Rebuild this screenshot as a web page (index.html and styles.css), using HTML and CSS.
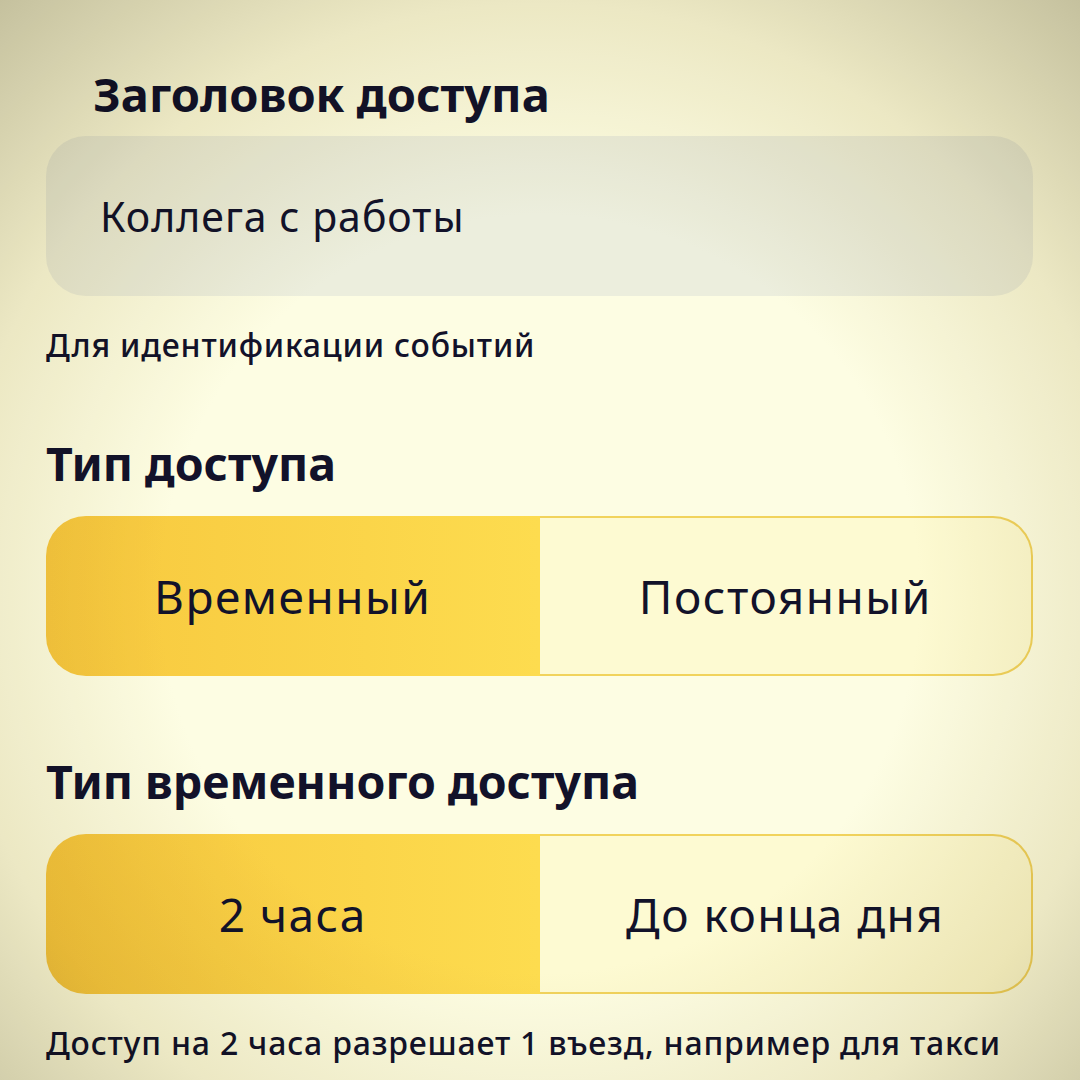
FILE: index.html
```html
<!DOCTYPE html>
<html lang="ru">

<head>
  <meta charset="UTF-8">
  <meta name="viewport" content="width=device-width, initial-scale=1.0">
  <title>Новый доступ</title>
  <link rel="stylesheet" href="styles.css">
</head>

<body>
  <div class="form">
    <h1 class="title">Заголовок доступа</h1>
    <div class="field">Коллега с работы</div>
    <p class="hint">Для идентификации событий</p>

    <h2 class="section">Тип доступа</h2>
    <div class="segmented">
      <button class="segment active">Временный</button>
      <button class="segment">Постоянный</button>
    </div>

    <h2 class="section section-second">Тип временного доступа</h2>
    <div class="segmented">
      <button class="segment active">2 часа</button>
      <button class="segment">До конца дня</button>
    </div>
    <p class="hint hint-bottom">Доступ на 2 часа разрешает 1 въезд, например для такси</p>
  </div>
</body>

</html>
```

FILE: styles.css
```css
body {
  margin: 0;
  min-height: 100vh;
  background-color: #fdfde3;
  font-family: "Noto Sans", "Open Sans", sans-serif;
  color: #12122a;
}

/* soft dark edges over the whole screen */
body::after {
  content: "";
  position: fixed;
  inset: 0;
  pointer-events: none;
  mix-blend-mode: multiply;
  background: radial-gradient(ellipse 78% 78% at 50% 55%, rgb(255, 255, 255) 45%, rgb(238, 234, 220) 70%, rgb(192, 188, 170) 100%);
}

.form {
  padding: 66px 47px 0 46px;
}

.title {
  margin: 0 0 14px 47px;
  font-size: 47px;
  line-height: 56px;
  font-weight: 700;
}

.field {
  display: flex;
  align-items: center;
  height: 160px;
  box-sizing: border-box;
  padding-left: 54px;
  border-radius: 40px;
  background-color: #eceedd;
  font-size: 41px;
  letter-spacing: 1px;
}

.hint {
  margin: 29px 0 0;
  font-size: 32px;
  line-height: 40px;
  font-weight: 500;
  letter-spacing: 0.8px;
}

.section {
  margin: 70px 0 25px;
  font-size: 46.5px;
  line-height: 56px;
  font-weight: 700;
}

.section-second {
  margin-top: 77px;
  margin-bottom: 25px;
}

.segmented {
  display: grid;
  grid-template-columns: 1fr 1fr;
  height: 160px;
}

.segment {
  border: 2px solid #f1d35c;
  border-left: none;
  border-radius: 0 40px 40px 0;
  background-color: #fdfad2;
  color: #12122a;
  font-family: inherit;
  font-size: 46px;
  letter-spacing: 1.5px;
  cursor: pointer;
}

.segment.active {
  border: none;
  border-radius: 40px 0 0 40px;
  background: linear-gradient(90deg, #f7c83e, #fddc4f);
}

.hint-bottom {
  margin-top: 29px;
}
```
